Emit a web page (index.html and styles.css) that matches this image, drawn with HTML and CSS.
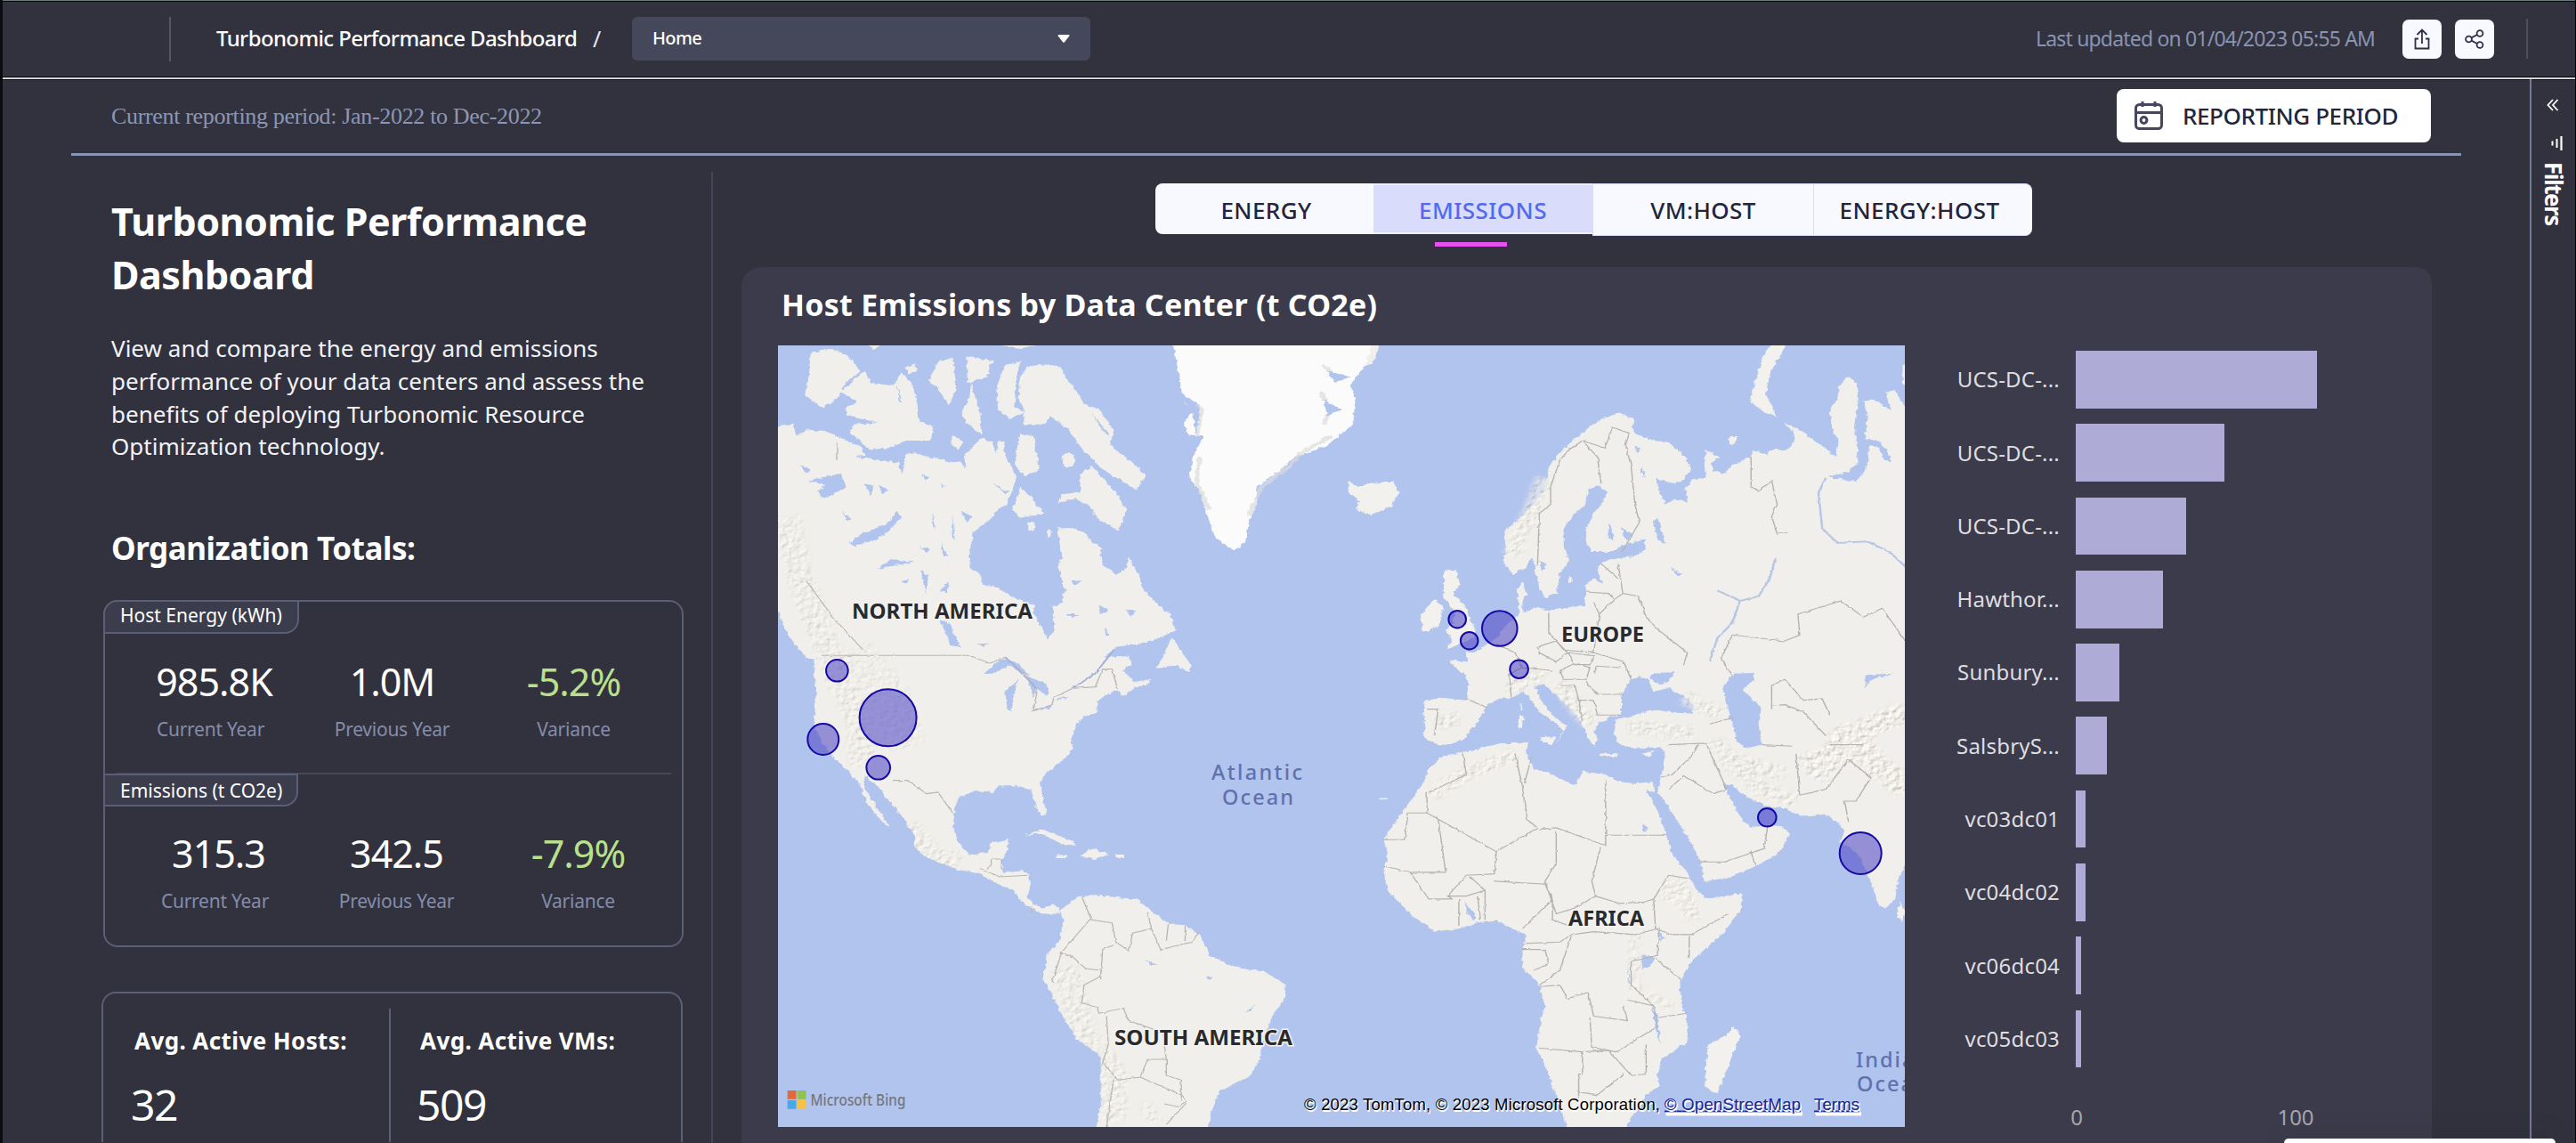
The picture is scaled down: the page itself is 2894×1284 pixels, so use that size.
FILE: index.html
```html
<!DOCTYPE html>
<html lang="en">
<head>
<meta charset="utf-8">
<title>Turbonomic Performance Dashboard</title>
<link rel="stylesheet" href="styles.css">
</head>
<body>
<header class="topbar">
  <span class="topbar-rule"></span>
  <span class="topbar-title">Turbonomic Performance Dashboard</span>
  <span class="topbar-slash">/</span>
  <div class="page-select"><span>Home</span>
    <svg width="14" height="9" viewBox="0 0 14 9"><path d="M1.5 0h11q1.5 0 .8 1.5L8 8.2q-1 1-2 0L.7 1.500Q0 0 1.500 0z" fill="#fff"/></svg>
  </div>
  <span class="updated">Last updated on 01/04/2023 05:55 AM</span>
  <button class="icon-btn"><svg width="18" height="24" viewBox="0 0 18 24" fill="none" stroke="#2e3048" stroke-width="1.8"><path d="M5 11.500H1.500V22.500H16.500V11.500H13M9 17V1.500M3.500 7L9 1.500L14.500 7"/></svg></button>
  <button class="icon-btn"><svg width="22" height="22" viewBox="0 0 22 22" fill="none" stroke="#2e3048" stroke-width="1.800"><circle cx="4.500" cy="11" r="3.400"/><circle cx="17" cy="4.500" r="3.400"/><circle cx="17" cy="17.500" r="3.400"/><path d="M7.500 9.400L14 6M7.500 12.600L14 16"/></svg></button>
  <span class="topbar-rule end"></span>
</header>
<div class="shell">
  <main class="main">
    <div class="period-bar">
      <span class="period-text">Current reporting period: Jan-2022 to Dec-2022</span>
      <button class="period-btn">
        <svg width="34" height="34" viewBox="0 0 34 34" fill="none" stroke="#45475e" stroke-width="3"><rect x="2.500" y="4.500" width="29" height="27" rx="4"/><path d="M2.500 13.500H31.500M10 1V7M24 1V7"/><circle cx="11.500" cy="22" r="3.400"/></svg>
        <span>REPORTING PERIOD</span>
      </button>
    </div>
    <div class="columns">
      <aside class="sidebar">
        <h1>Turbonomic Performance Dashboard</h1>
        <p class="intro">View and compare the energy and emissions performance of your data centers and assess the benefits of deploying Turbonomic Resource Optimization technology.</p>
        <h2>Organization Totals:</h2>
        <section class="card totals">
          <div class="block">
            <span class="tag first">Host Energy (kWh)</span>
            <div class="metrics">
              <div class="metric"><b class="lead">985.8K</b><span>Current Year</span></div>
              <div class="metric"><b>1.0M</b><span>Previous Year</span></div>
              <div class="metric"><b class="good">-5.2%</b><span>Variance</span></div>
            </div>
          </div>
          <div class="block second">
            <span class="tag">Emissions (t CO2e)</span>
            <div class="metrics">
              <div class="metric"><b class="lead">315.3</b><span>Current Year</span></div>
              <div class="metric"><b>342.5</b><span>Previous Year</span></div>
              <div class="metric"><b class="good">-7.9%</b><span>Variance</span></div>
            </div>
          </div>
        </section>
        <section class="card actives">
          <div class="active"><h3>Avg. Active Hosts:</h3><b>32</b></div>
          <div class="active split"><h3>Avg. Active VMs:</h3><b>509</b></div>
        </section>
      </aside>
      <section class="content">
        <nav class="tabs">
          <a class="tab">ENERGY</a>
          <a class="tab on">EMISSIONS</a>
          <a class="tab tall">VM:HOST</a>
          <a class="tab tall last">ENERGY:HOST</a>
        </nav>
        <div class="tab-mark"></div>
        <div class="panel">
          <h2>Host Emissions by Data Center (t CO2e)</h2>
          <div class="panel-body">
            <svg class="map" width="1266" height="878" viewBox="874 388 1266 878">
              <defs>
                <filter id="coast" x="-2%" y="-2%" width="104%" height="104%">
                  <feTurbulence type="fractalNoise" baseFrequency=".07" numOctaves="3" seed="4" result="n"/>
                  <feDisplacementMap in="SourceGraphic" in2="n" scale="13" xChannelSelector="R" yChannelSelector="G" result="d"/>
                  <feGaussianBlur in="d" stdDeviation=".8"/>
                </filter>
                <filter id="soft"><feTurbulence type="fractalNoise" baseFrequency=".06" numOctaves="2" seed="9" result="n"/><feDisplacementMap in="SourceGraphic" in2="n" scale="8" xChannelSelector="R" yChannelSelector="G" result="d"/><feGaussianBlur in="d" stdDeviation=".5"/></filter>
                <filter id="relief" x="-5%" y="-5%" width="110%" height="110%">
                  <feTurbulence type="fractalNoise" baseFrequency=".06" numOctaves="4" seed="2" result="t"/>
                  <feDiffuseLighting in="t" surfaceScale="5" diffuseConstant="1.15" lighting-color="#f4f1ea" result="l"><feDistantLight azimuth="225" elevation="58"/></feDiffuseLighting>
                  <feGaussianBlur in="SourceGraphic" stdDeviation="7" result="b"/>
                  <feComposite in="l" in2="b" operator="in"/>
                </filter>
                <clipPath id="frame"><rect x="874" y="388" width="1266" height="878"/></clipPath>
                <clipPath id="landclip"><use href="#na"/><use href="#sa"/></clipPath>
              </defs>
              <rect x="874" y="388" width="1266" height="878" fill="#b1c4ee"/>
              <g clip-path="url(#frame)">
              <g transform="translate(860 380) scale(.4209 .3333)">
                <g filter="url(#coast)">
                <g fill="#f0efeb">
                  <path id="na" d="M20 300L75 290 82 330 110 310 160 312 200 335 260 370 265 395 240 400 330 415 355 420 365 460 375 390 400 385 425 400 470 405 490 420 520 415 535 440 530 400 550 370 575 335 605 350 615 390 620 345 635 350 640 395 660 440 670 480 650 540 645 560 620 575 600 610 555 655 545 720 545 770 575 800 580 830 620 840 655 870 690 885 720 900 715 930 740 980 755 1015 770 985 770 950 765 905 790 890 800 850 790 800 780 770 790 740 785 690 780 640 820 640 850 650 870 685 895 700 900 765 935 795 965 770 968 735 985 770 1000 805 1010 850 1040 890 1080 930 1095 985 1050 1010 1000 1030 935 1040 905 1075 970 1070 975 1100 955 1120 985 1158 1030 1148 1020 1165 985 1180 955 1205 935 1185 905 1205 885 1225 885 1260 850 1275 830 1300 815 1350 820 1380 805 1410 750 1465 735 1490 735 1525 750 1600 735 1610 720 1570 710 1525 680 1510 620 1510 610 1530 560 1525 515 1550 505 1590 500 1650 515 1700 545 1740 590 1735 605 1700 650 1688 645 1730 630 1760 635 1800 685 1795 705 1810 705 1860 695 1885 720 1910 745 1925 765 1905 785 1920 785 1940 745 1940 720 1930 690 1905 660 1860 620 1840 570 1805 510 1790 430 1750 395 1710 400 1680 370 1620 330 1560 300 1510 268 1475 262 1510 290 1570 332 1645 322 1645 275 1575 250 1500 205 1440 180 1410 150 1360 130 1300 135 1200 130 1120 130 1080 80 1010 60 950 20 910Z"/>
                  <path id="sa" d="M785 1930L830 1885 880 1875 900 1880 990 1890 1030 1930 1070 1970 1120 1980 1160 2010 1185 2080 1250 2120 1330 2135 1385 2175 1390 2215 1350 2290 1325 2370 1320 2430 1290 2490 1210 2540 1190 2610 1180 2680 880 2680 895 2580 895 2420 830 2360 790 2280 760 2200 740 2160 750 2080 785 2030 795 1960Z"/>
                  <path d="M120 50L170 35 215 55 255 110 215 150 190 205 150 235 105 190 118 120ZM265 110L280 150 340 160 362 115 390 150 405 220 410 280 450 300 440 345 380 345 330 370 280 375 225 320 235 290 300 285 215 260 215 230 245 215 200 180ZM372 100L400 85 402 112 382 122ZM460 80L500 65 510 170 490 225 460 170 437 140ZM535 62L605 75 590 130 540 150ZM548 150L575 270 578 325 540 290 522 250 545 200ZM640 90L680 80 668 140 665 230 690 250 655 272 620 240 618 160ZM700 95L745 88 790 95 800 130 830 180 850 220 890 240 930 310 920 360 960 400 1015 460 990 510 950 480 900 440 850 380 810 310 760 260 750 290 690 290 690 240 676 200 680 130ZM870 430L900 470 940 530 965 580 942 648 890 610 860 560 830 540 780 555 790 525 840 520 840 460ZM680 500L720 550 742 590 680 605 658 580ZM680 320L715 330 732 440 695 465 665 430 670 380ZM270 20H310L290 38ZM605 20H740L680 33ZM495 325L525 345 515 375 495 355ZM1085 1010L1110 1055 1135 1100 1130 1125 1100 1105 1045 1112 1065 1060Z"/>
                  <ellipse cx="808" cy="410" rx="18" ry="24"/><ellipse cx="710" cy="632" rx="11" ry="14"/><ellipse cx="757" cy="657" rx="7" ry="14"/>
                  <path d="M693 1675L735 1655 775 1670 832 1705 800 1712 770 1692 735 1668ZM838 1748L870 1718 918 1740 880 1755ZM778 1742H805V1752H778ZM932 1740H957V1750H932Z"/>
                  <path d="M1525 80L1620 90 1640 20H1500ZM33 920L70 960 110 1030 140 1080 110 1080 60 1000Z"/>
                </g>
                <path fill="#fbfbfb" d="M1088 20L1100 100 1112 190 1160 225 1118 280 1130 325 1170 330 1140 400 1132 470 1160 520 1180 600 1200 670 1250 715 1280 690 1290 620 1310 560 1310 500 1380 440 1410 400 1440 390 1500 360 1568 290 1575 200 1560 160 1600 90 1620 20Z"/>
                <path fill="none" stroke="#dcdcda" stroke-width="12" opacity=".7" d="M1120 215L1165 240 1150 330M1160 400L1150 480 1185 580M1290 600L1310 540 1325 500 1400 430 1430 385 1510 330M1480 180L1510 240 1490 290M1490 90L1530 140"/>
                <g fill="#b1c4ee">
                  <path d="M115 480L200 455 215 500 160 540 138 515 160 495ZM225 690L260 655 320 630 350 585 362 600 340 640 290 680 240 700ZM295 780L340 745 400 755 340 765ZM465 950L490 960 520 1040 495 1035ZM583 1130L625 1082 665 1090 705 1135 650 1105 605 1132ZM640 1190L675 1150 662 1200 657 1258 645 1250ZM700 1140L752 1165 755 1205 722 1180 715 1215ZM708 1257L765 1235 760 1248ZM765 1218L805 1205 800 1215ZM870 250L920 330 905 320ZM1100 170L1160 240 1150 330 1140 250ZM415 780L435 800 428 860 420 820ZM465 850L490 820 485 860ZM890 900L915 915 895 930ZM1490 210L1540 240 1500 260ZM1500 110L1560 130 1520 150ZM265 490L290 500 280 530ZM300 495L330 510 315 525ZM350 150L365 215 358 215ZM445 590L455 640 447 640ZM500 600L505 680 498 670ZM410 700L440 715 430 722ZM800 930L840 930 820 942ZM960 915L990 920 975 935ZM1015 2095L1045 2110 1030 2115ZM1175 2145L1190 2155 1185 2165ZM1280 2270L1305 2245 1295 2270ZM90 425L118 440 108 455ZM415 460L440 470 430 480ZM465 490L480 500 470 505ZM520 580L550 600 540 620ZM470 690L485 730 475 735ZM610 490L650 520 640 525ZM205 585L230 610 218 615ZM360 820L385 810 375 825ZM815 820L845 815 825 835ZM905 975L920 1000 908 1005ZM565 1030L600 1028 580 1040Z"/>
                </g>
                </g>
                <g clip-path="url(#landclip)"><g filter="url(#relief)" fill="none" stroke="#000" stroke-opacity=".5" stroke-width="70">
                  <path d="M60 600L90 800 150 1000 200 1150 250 1300 260 1440M380 1640L430 1740 520 1770M800 2120L850 2340 930 2480 930 2640M1010 2620L1040 2600" /><path d="M230 1050L330 1200 380 1380" stroke-width="110" stroke-opacity=".35"/>
                </g></g>
                <g filter="url(#soft)" fill="none" stroke="#b9b7b2" stroke-width="3.200">
                  <path d="M150 1069H540L600 1095 640 1075 700 1140 725 1190 715 1255 765 1235 770 1210 820 1180 880 1175 900 1115 925 1115 940 1185M340 1490H380L430 1535 460 1530 500 1600M190 350V410M110 820L180 940 260 1050"/>
                  <path d="M595 1790L605 1755H630V1790M575 1790L625 1815 700 1810M710 1915V1935M845 1885L870 1960 925 1970 935 2035 970 2065 980 2005 1030 1990 1020 1935M865 1960L790 2070 820 2085 855 2125 895 2130V2160M790 2070L765 2170M930 2045L900 2060 895 2150 850 2180 845 2240 885 2255 890 2275 955 2258 970 2300 1060 2340 1070 2430 1020 2430 1000 2490 1110 2550 1125 2570 1100 2590 1065 2580M910 2280L915 2380 900 2440 940 2500 1000 2490M1030 1990L1055 2060 1140 2035 1155 2000M1075 1975L1070 2030M1120 1980V2035M1125 2575L1070 2650M930 2490L910 2660M1070 2430V2485L1110 2500V2570"/>
                </g>
                <path d="M930 1050L880 1130 820 1180M640 1075L725 1180" fill="none" stroke="#a3b2d8" stroke-width="5" filter="url(#soft)"/>
              </g>
              <g transform="translate(1500 380) scale(.4209 .3333)">
                <g filter="url(#coast)">
                <path fill="#f0efeb" d="M1560 240L1522 235 1495 175 1470 180 1482 242 1440 205 1410 210 1420 260 1415 340 1450 345 1475 380 1485 415 1465 410 1450 365 1425 365 1424 410 1412 450 1390 482 1315 468 1370 450 1395 420 1395 370 1385 300 1397 200 1390 150 1370 130 1345 160 1340 210 1320 235 1325 300 1345 350 1335 400 1300 360 1240 310 1200 285 1225 320 1225 350 1205 375 1160 375 1150 395 1115 375 1110 400 1060 425 1040 455 1010 450 1005 420 1025 400 990 375 985 430 990 470 955 475 935 510 940 550 900 545 880 560 865 510 855 470 900 488 930 480 948 440 935 400 890 350 850 345 800 320 790 300 800 275 760 250 715 270 690 290 650 330 620 360 590 400 570 440 555 520 530 560 500 600 450 650 455 700 450 760 475 795 510 770 527 740 535 790 545 840 560 875 590 860 600 790 625 750 610 700 610 640 640 590 665 565 675 510 700 495 725 515 715 550 690 590 670 640 670 690 685 720 740 720 780 690 825 680 830 710 800 735 760 740 710 755 700 780 715 830 690 810 670 830 665 900 600 910 570 920 540 905 500 925 500 890 512 860 502 820 485 850 490 900 490 930 455 970 430 1010 400 1035 370 1060 345 1055 355 1090 305 1085 320 1110 345 1130 355 1170 350 1220 290 1212 240 1220 235 1260 240 1300 238 1345 265 1365 290 1372 345 1350 375 1300 400 1250 410 1232 435 1215 470 1212 500 1190 522 1215 545 1260 592 1300 610 1325 590 1370 605 1330 620 1310 580 1270 545 1215 535 1170 560 1165 600 1215 640 1260 660 1300 672 1340 690 1375 702 1350 690 1330 705 1295 740 1275 765 1268 765 1210 780 1160 810 1140 835 1150 850 1190 890 1180 930 1205 960 1240 950 1265 900 1262 850 1250 800 1270 750 1285 745 1330 760 1370 800 1382 870 1378 880 1400 875 1450 865 1500 860 1535 875 1550 910 1620 945 1690 975 1760 985 1830 1050 1820 1120 1780 1180 1740 1215 1670 1190 1645 1155 1640 1110 1650 1085 1620 1050 1540 1038 1500 1060 1505 1090 1540 1150 1575 1200 1585 1240 1610 1310 1605 1340 1630 1360 1660 1345 1700 1370 1710 1400 1750 1430 1830 1450 1910 1470 1925 1495 1890 1502 1820 1522 1780 1560 1760Z"/>
                <path fill="#f1efeb" d="M290 1405L350 1395 440 1365 515 1365 510 1405 530 1450 580 1470 640 1510 660 1460 720 1470 760 1495 800 1500 850 1495 853 1530 830 1525 860 1590 880 1660 900 1740 940 1800 965 1860 990 1890 1085 1870 1085 1920 1040 2000 950 2100 920 2170 925 2250 940 2300 940 2370 870 2430 860 2480 865 2520 830 2550 790 2630 770 2680 625 2680 600 2590 575 2500 560 2450 535 2390 550 2300 560 2250 545 2180 500 2120 500 2060 510 2010 480 1995 430 1960 380 1970 330 1990 265 2000 200 1940 140 1860 130 1800 140 1740 130 1690 165 1620 200 1560 235 1500 250 1450Z"/>
                <g fill="#f2f1ee">
                  <path d="M35 480L60 500 90 490 155 482 170 520 150 565 95 598 55 575 65 550 35 520ZM290 785L320 780 335 830 315 860 345 900 365 960 375 980 370 1010 300 1048 310 1010 295 985 315 960 318 920 290 870ZM268 880L288 905 277 970 235 992 228 930 250 900ZM1165 15H1207L1160 120 1150 190 1178 262 1145 250 1105 210 1120 150 1140 70ZM1515 90H1540V190L1515 150ZM545 1345L590 1342 578 1372 545 1355ZM490 1270L502 1275 498 1320 488 1310ZM492 1230L498 1232 496 1262ZM703 1400L757 1402 750 1410 705 1408ZM822 1400L850 1388 840 1412ZM1065 2320L1080 2350 1050 2450 1020 2545 987 2525 988 2460 998 2380 1040 2350ZM1505 1900L1522 1930 1515 1970 1500 1950ZM1054 330L1072 330 1070 355 1052 358ZM120 1550H145V1554H120ZM625 800L632 815 625 825Z"/>
                </g>
                <g fill="#b1c4ee">
                  <path d="M1062 1130L1118 1128 1118 1150 1088 1185 1108 1210 1135 1240 1130 1300 1138 1370 1100 1382 1072 1360 1060 1300 1045 1240 1035 1180ZM838 1140L860 1128 908 1125 888 1160 860 1165ZM860 600L880 690 862 680 850 620ZM895 770L925 795 915 803ZM1415 1135L1490 1130 1430 1150 1415 1180ZM730 620L745 680 728 670ZM765 640L795 660 775 685ZM820 430L830 470 815 450ZM800 365L815 370 805 390ZM545 750L565 760 552 785ZM818 2080L852 2085 842 2115 820 2125ZM345 1900L378 1950 370 1965 355 1940ZM780 2110L790 2200 783 2170ZM845 2240L860 2290 870 2380 855 2330ZM820 1635L835 1650 822 1665ZM860 1990L880 2025 868 2030ZM1445 190L1480 240 1460 230Z"/>
                </g>
                </g>
                <g filter="url(#relief)" fill="none" stroke="#000" stroke-opacity=".6" stroke-width="46">
                  <path d="M470 1170L560 1130M480 1165L470 1190M930 1210L1030 1270M1010 1350L1060 1440 1140 1520 1230 1560M560 470L500 650 470 730M1060 1420L1200 1470M600 1160L640 1240 680 1300M260 1540L330 1480 480 1400M780 1310L960 1330M910 1830L960 1960M270 1300L330 1280M900 1830L890 1900"/>
                  <path d="M1280 1480L1360 1340 1522 1260M1380 1340L1440 1430 1530 1530M1250 1440L1400 1380" stroke-width="70" stroke-opacity=".8"/>
                  <path d="M800 2010L800 2180 900 2260" stroke-width="30" stroke-opacity=".4"/>
                </g>
                <g filter="url(#soft)" fill="none" stroke="#b5b3af" stroke-width="3.400">
                  <path d="M540 770L545 590 575 560 575 500 600 410 625 375 660 345 700 400 710 490M660 345L720 370 740 300 785 320 775 360 790 430 800 560 812 620 765 720M755 760L768 860 810 870 830 940 860 980 940 1060 930 1100M710 760L755 810M670 855L730 860 745 880 705 930 690 890M768 860L745 880M570 925V990L610 1050 690 1060 705 930M540 1040L590 1020 620 1060 590 1090 545 1060ZM620 1060L690 1070 680 1100 640 1100ZM600 1120L640 1095 680 1110 670 1150 610 1150ZM690 1060L770 1090 790 1150M670 1160L700 1200 770 1200M690 1130L700 1105 760 1110M600 1170L640 1170 650 1220 690 1220 700 1270 760 1270M650 1220L660 1290M430 1030L480 1060 500 1110 465 1130 470 1210M350 1215L405 1245M245 1250H275L265 1340M500 1110L580 1120"/>
                  <path d="M1110 400L1110 500 1130 515 1165 480 1180 560 1165 600 1180 660 1210 655M1030 1080L1060 1000 1200 1020 1240 1000 1235 930 1350 885 1410 940 1460 910 1522 1020M1030 1080L1060 1140M1165 1250V1170L1200 1150 1250 1220 1300 1215 1320 1270M1165 1240L1200 1235 1250 1260 1310 1340M1000 1300L1060 1280M885 1370L990 1365 1020 1450 1045 1520 1010 1535 930 1475 890 1520M870 1480L900 1470 950 1410 970 1370M1230 1400L1240 1540M1320 1370L1410 1370M1240 1540L1310 1520 1370 1420 1430 1480 1390 1560 1360 1560 1370 1630M975 1765L1040 1765 1145 1720 1155 1640M1140 1370L1220 1375M1110 1730L1120 1775"/>
                  <path d="M340 1400L350 1470 250 1530M245 1530V1600L430 1730 540 1650 510 1620 500 1510 480 1400M525 1410L505 1500M245 1600H195L185 1690H130M275 1620L295 1800H200L135 1780M430 1730L425 1805 350 1810 300 1880 310 1890H250L200 1800M722 1490V1710L590 1650 545 1655M722 1675H885M708 1715L685 1830 695 1880 640 1920 590 1940 560 1830 590 1770V1660M695 1880L760 1905 825 1900 850 1890M425 1830L560 1840 580 1890 500 1990M360 1815L400 1860 350 1880 300 1880M330 1890V1980M380 1880L388 1960M400 1860V1960M580 1890L580 1960 625 1980M500 2040L600 2035 630 2010 690 2000 800 2010 860 1990M855 1990L850 1890 890 1810 940 1820M855 1990L900 2010 950 2010 1050 1940M945 2015V2090M855 2090L925 2165M630 2015L600 2130 545 2180M600 2180L620 2225 675 2205 690 2285 780 2300 770 2250M545 2185L600 2180M680 2290L685 2390 750 2405 860 2320 850 2250 780 2230M540 2392L660 2405 730 2400 790 2485 830 2480 830 2380M660 2405V2480H650V2560M650 2540L700 2550 770 2480M860 2290L940 2275M865 1985L860 2080 790 2100M790 2100V2180L850 2250M500 2060L560 2060 570 2110 530 2130"/>
                </g>
                <path d="M1020 850L1080 885 1060 960 1020 1010 1000 1090M1080 885L1130 870 1160 810 1175 740M1310 470L1290 520 1300 640 1340 690 1420 685 1480 720 1522 770" fill="none" stroke="#b9c6e4" stroke-width="6" filter="url(#soft)"/>
              </g>
              <g class="map-land-text">
                <text x="957" y="695" textLength="203" lengthAdjust="spacingAndGlyphs">NORTH AMERICA</text>
                <text x="1754" y="720.500" textLength="93" lengthAdjust="spacingAndGlyphs">EUROPE</text>
                <text x="1762" y="1040" textLength="85" lengthAdjust="spacingAndGlyphs">AFRICA</text>
                <text x="1252" y="1174" textLength="200" lengthAdjust="spacingAndGlyphs">SOUTH AMERICA</text>
              </g>
              <g class="map-sea-text">
                <text x="1361" y="876" textLength="104">Atlantic</text>
                <text x="1373" y="903.500" textLength="82">Ocean</text>
                <text x="2085" y="1199">Indian</text>
                <text x="2086" y="1226">Ocean</text>
              </g>
              <g class="bubbles">
                <circle cx="940.400" cy="753.300" r="12.300"/><circle cx="997.600" cy="806.300" r="32"/><circle cx="924.800" cy="830.500" r="17.500"/><circle cx="986.700" cy="862.300" r="13.300"/>
                <circle cx="1637.200" cy="695.700" r="9.800"/><circle cx="1650.700" cy="719.700" r="9.800"/><circle cx="1684.800" cy="706" r="19.800"/><circle cx="1706.600" cy="751.700" r="10.300"/>
                <circle cx="1985.300" cy="918.300" r="10.300"/><circle cx="2090.200" cy="958.500" r="23.500"/>
              </g>
              <path fill="#e3683a" d="M884.700 1225h9.800v9.800h-9.800z"/><path fill="#8fc251" d="M895.700 1225h9.800v9.800h-9.800z"/><path fill="#48a8ea" d="M884.700 1236h9.800v9.800h-9.800z"/><path fill="#f7c244" d="M895.700 1236h9.800v9.800h-9.800z"/>
              <text class="bing" x="910.500" y="1241.500" textLength="107" lengthAdjust="spacingAndGlyphs">Microsoft Bing</text>
              <g class="credit">
                <text x="1465" y="1246.500" textLength="400">© 2023 TomTom, © 2023 Microsoft Corporation,</text>
                <text class="link" x="1870" y="1246.500" textLength="153">© OpenStreetMap</text>
                <text class="link" x="2038" y="1246.500" textLength="51">Terms</text>
              </g>
              </g>
            </svg>
            <div class="chart">
              <div class="row"><span>UCS-DC-...</span><i style="width:271px"></i></div>
              <div class="row"><span>UCS-DC-...</span><i style="width:167px"></i></div>
              <div class="row"><span>UCS-DC-...</span><i style="width:124px"></i></div>
              <div class="row"><span>Hawthor...</span><i style="width:98px"></i></div>
              <div class="row"><span>Sunbury...</span><i style="width:48.500px"></i></div>
              <div class="row"><span>SalsbryS...</span><i style="width:35px"></i></div>
              <div class="row"><span>vc03dc01</span><i style="width:10.500px"></i></div>
              <div class="row"><span>vc04dc02</span><i style="width:10.500px"></i></div>
              <div class="row"><span>vc06dc04</span><i style="width:5.500px"></i></div>
              <div class="row"><span>vc05dc03</span><i style="width:5.500px"></i></div>
              <div class="axis"><span>0</span><span>100</span></div>
            </div>
          </div>
        </div>
      </section>
    </div>
  </main>
  <aside class="filters">
    <svg width="14" height="14" viewBox="0 0 14 14" fill="none" stroke="#fff" stroke-width="1.800"><path d="M7 1L1.500 7L7 13M12.500 1L7 7L12.500 13"/></svg>
    <svg class="lines" width="14" height="16" viewBox="0 0 14 16" fill="none" stroke="#fff"><path d="M12.500 0V16" stroke-width="2.200"/><path d="M7.500 3V13M2.500 5.500V10.500" stroke-width="2"/></svg>
    <span>Filters</span>
  </aside>
</div>
<div class="toast"></div>
</body>
</html>
```
FILE: styles.css
```css
* { box-sizing: border-box; margin: 0; padding: 0; }
html, body { width: 2894px; height: 1284px; overflow: hidden; }
body {
  position: relative;
  display: flex;
  flex-direction: column;
  background: #31323e;
  border-left: 3px solid #0b0b12;
  border-right: 1px solid #000;
  color: #fff;
  font-family: "Noto Sans", sans-serif;
}
button { border: 0; font: inherit; display: flex; align-items: center; justify-content: center; }
svg { display: block; flex: none; }

.topbar {
  flex: none;
  height: 89px;
  display: flex;
  align-items: center;
  border-top: 1px solid #6f7a7b;
  border-bottom: 2px solid #d4d4da;
  box-shadow: inset 0 1px #08080f, inset 0 -1px #08080f, 0 1px #08081c;
  padding-bottom: 1px;
}
.topbar-rule { width: 2px; height: 50px; background: #555764; margin-left: 187px; }
.topbar-title { margin-left: 51px; font-size: 24px; font-weight: 500; letter-spacing: -.62px; white-space: nowrap; width: 423px; line-height: 32px; margin-top: -2px; }
.topbar-slash { font-size: 25px; width: 44px; margin-top: -2px; color: #e6e6f2; }
.page-select {
  width: 515px; height: 49px;
  display: flex; align-items: center; justify-content: space-between;
  padding: 0 23px 0 23px;
  background: #45475a; border-radius: 6px;
  font-size: 20px; font-weight: 500; letter-spacing: -.6px;
}
.page-select span { margin-top: -2px; }
.updated { margin-left: auto; width: 412px; font-size: 23px; letter-spacing: -.82px; color: #8a93b0; white-space: nowrap; margin-top: -1px; }
.icon-btn { width: 44px; height: 44px; border-radius: 7px; background: #f8f9ff; margin-right: 15px; }
.topbar-rule.end { height: 45px; margin: 0 53px 0 21px; background: #4c4e5c; }

.shell { flex: 1; min-height: 0; display: flex; overflow: hidden; }
.main { flex: 1; min-width: 0; display: flex; flex-direction: column; }
.period-bar {
  flex: none; height: 86px; margin: 0 77px 0 77px; padding: 0 34px 12px 45px;
  display: flex; align-items: flex-end; justify-content: space-between;
  border-bottom: 3px solid #8894b4;
}
.period-text { font: 26px/36px "Liberation Serif", serif; letter-spacing: -.33px; color: #8c96b4; margin-bottom: 11px; }
.period-btn { width: 353px; height: 60px; border-radius: 8px; background: #fff; color: #23253b; font-size: 26px; font-weight: 500; letter-spacing: -.4px; gap: 21px; padding-right: 18px; white-space: nowrap; }
.columns { flex: 1; min-height: 0; display: flex; }

.sidebar { width: 798px; flex: none; padding-left: 122px; position: relative; }
.sidebar::after { content: ""; position: absolute; right: 0; top: 18px; bottom: 0; width: 2px; background: #444658; }
.sidebar h1 { margin-top: 44px; width: 600px; font-size: 43px; line-height: 60px; font-weight: 700; letter-spacing: -.47px; }
.intro { margin-top: 34px; width: 610px; font-size: 26px; line-height: 36.8px; letter-spacing: .03px; color: #f2f2f6; }
.sidebar h2 { margin-top: 72px; font-size: 35px; line-height: 48px; font-weight: 700; letter-spacing: -.45px; }
.card { border: 2px solid #5a5e76; border-radius: 16px; }
.totals { width: 652px; height: 390px; margin: 34px 0 0 -9px; }
.block { height: 194px; }
.tag {
  display: block; width: 220px; height: 38px; margin: -2px 0 0 -2px; padding-left: 17px;
  border: 2px solid #5a5e76; border-radius: 0 0 16px 0; background: #3b3c4c;
  font-size: 21px; line-height: 31px; white-space: nowrap;
}
.tag.first { border-top-left-radius: 16px; }
.block.second { position: relative; }
.block.second::before { content: ""; position: absolute; left: 13px; right: 12px; top: -1px; height: 2px; background: #45475a; }
.block.second .tag { position: relative; margin-top: 1px; width: 219px; line-height: 35px; height: 37px; }
.metrics { display: grid; grid-template-columns: 207px 201px 207px; margin: 29px 0 0 15px; text-align: center; }
.second .metrics { margin: 28px 0 0 20px; }
.metric b { display: block; font-size: 43px; line-height: 50px; font-weight: 400; letter-spacing: -1px; }
.metric b.lead { padding-left: 8px; }
.metric b.good { color: #b9e08c; }
.metric span { display: block; margin-top: 14px; font-size: 21px; line-height: 28px; font-weight: 400; letter-spacing: -.25px; color: #858ca9; }
.actives { width: 653px; height: 169px; margin: 50px 0 0 -11px; display: flex; padding-top: 17px; border-bottom: 0; border-radius: 16px 16px 0 0; }
.active { width: 321px; padding: 16px 0 0 35px; }
.active.split { border-left: 2px solid #5a5e76; padding-left: 33px; }
.active h3 { font-size: 26px; line-height: 40px; font-weight: 700; letter-spacing: .4px; white-space: nowrap; }
.active b { display: block; margin: 22px 0 0 -4px; font-size: 48px; line-height: 60px; font-weight: 400; letter-spacing: -1.5px; }

.content { flex: 1; min-width: 0; padding-left: 32px; display: flex; flex-direction: column; align-items: flex-start; }
.tabs { display: flex; align-items: flex-start; margin: 31px 0 0 465px; }
.tab { height: 57px; width: 245px; background: #f8f9ff; color: #23253b; font-size: 26px; font-weight: 500; letter-spacing: .4px; line-height: 60px; text-align: center; border-radius: 8px 0 0 8px; padding-left: 4px; }
.tab.on { width: 246px; background: #d9dcfb; color: #5468f0; border-radius: 0; border-block: 2px solid #eceefe; line-height: 57px; padding: 0; }
.tab.tall { height: 59px; width: 249px; border-radius: 0; border: 1px solid #d9dcfb; line-height: 58px; padding: 0; }
.tab.tall.last { width: 245px; border-radius: 0 8px 8px 0; border-right: 0; border-left: 0; padding-right: 8px; }
.tab-mark { width: 81px; height: 5px; margin: 7px 0 0 779px; background: #e74ff0; }
.panel { flex: 1; width: 1899px; margin-top: 23px; padding: 19px 0 0 41px; background: #3b3b4b; border-radius: 22px 18px 0 0; }
.panel h2 { padding-left: 4px; font-size: 34px; line-height: 46px; font-weight: 700; letter-spacing: .25px; }
.panel-body { display: flex; margin-top: 23px; }
.map { font-family: "Noto Sans", sans-serif; }
.map-land-text { font-size: 23px; font-weight: 700; fill: #2a2a2c; stroke: #f3f2ef; stroke-width: 3px; paint-order: stroke; }
.map-sea-text { font-size: 23.500px; font-weight: 500; letter-spacing: 2px; fill: #6071ad; }
.bubbles { fill: #4a41c4; fill-opacity: .55; stroke: #1508a5; stroke-width: 2px; }
.bing { font-size: 18px; font-weight: 500; fill: #757779; }
.credit { font: 18.500px "Liberation Sans", sans-serif; fill: #000; text-shadow: 1px 1px 1px #fff, 1px 2px 0 #fff; }
.credit .link { fill: #1a2a9c; text-decoration: underline; }

.chart { display: flex; flex-direction: column; gap: 17.600px; padding: 6px 0 0 37px; }
.row { display: flex; align-items: center; height: 64.700px; }
.row span { width: 137px; margin: -1px 18px 0 0; text-align: right; font-size: 24px; color: #dedee0; letter-spacing: .2px; white-space: nowrap; }
.row i { height: 100%; background: #aeabd6; }
.axis { margin: 22px 0 0 106px; display: flex; font-size: 24px; line-height: 32px; color: #a5a5b0; }
.axis span { width: 100px; text-align: center; }
.axis span + span { margin-left: 146px; }

.filters { width: 51px; flex: none; border-left: 2px solid #747a99; display: flex; flex-direction: column; align-items: flex-start; padding: 22px 0 0 17px; }
.filters .lines { margin: 28px 0 0 4px; }
.filters span { writing-mode: vertical-rl; font-size: 26px; line-height: 26px; font-weight: 700; letter-spacing: -1.500px; margin: 13px 0 0 -5px; }

.toast { position: absolute; left: 2563px; top: 1279px; width: 305px; height: 5px; border-radius: 10px 10px 0 0; background: #fff; box-shadow: 0 0 30px rgba(0, 0, 0, .25); }
```
